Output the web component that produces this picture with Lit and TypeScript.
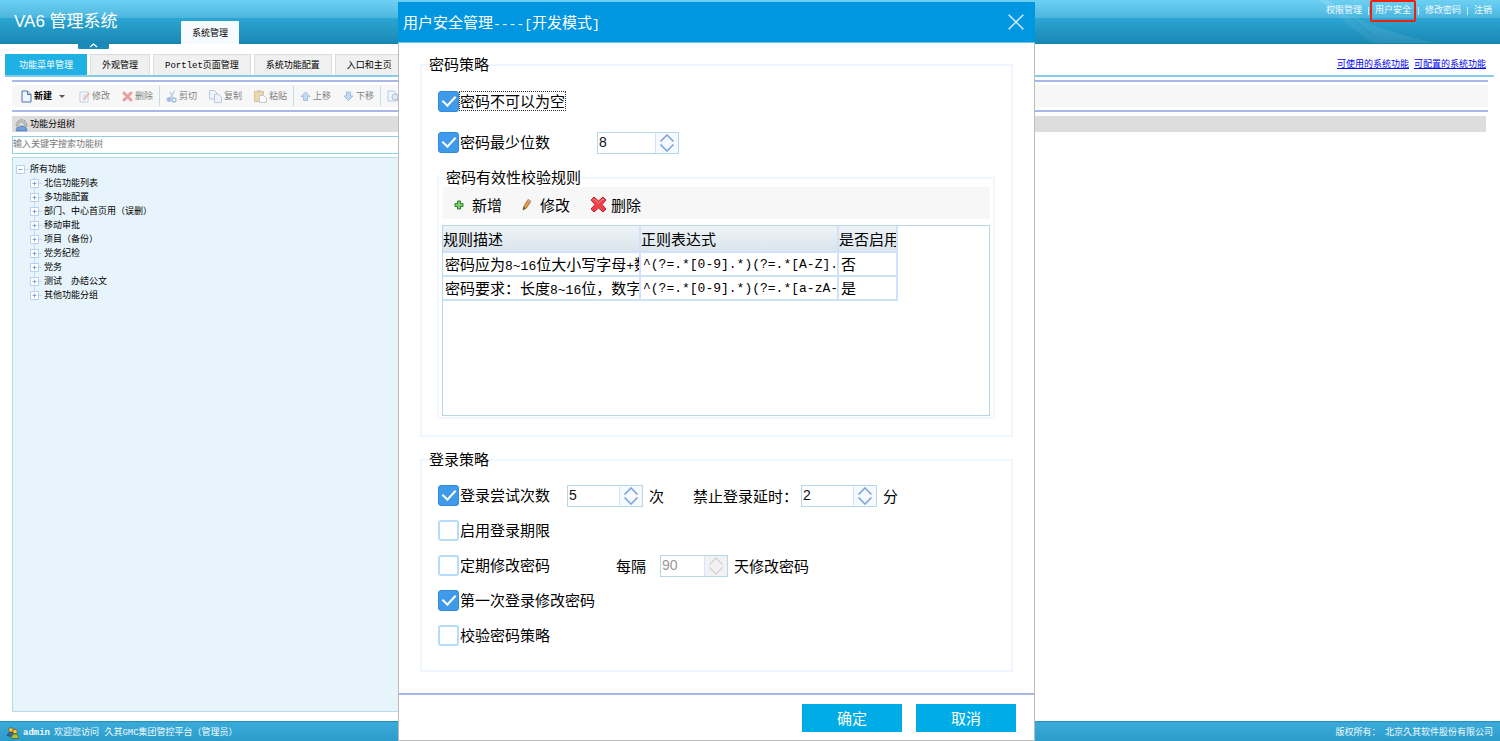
import { LitElement, html, svg, css } from "lit";
import { customElement, property } from "lit/decorators.js";

const icon = (w: number, h: number, body: unknown) =>
  html`<svg width=${w} height=${h} viewBox="0 0 ${w} ${h}" aria-hidden="true">${body}</svg>`;

const pageIcon = icon(11, 13, svg`
  <path d="M1 1h5.5L10 4.5V12H1z" fill="#eef5ff" stroke="#4a72ad"/>
  <path d="M6.5 1v3.5H10" fill="#b9d0f0" stroke="#4a72ad"/>`);
const editIcon = icon(11, 13, svg`
  <path d="M1 2h8v10H1z" fill="#fff" stroke="#7fa6d6"/>
  <path d="M3 5h4M3 7h3M3 9h4" stroke="#9dbce0"/>
  <path d="M4 9l5.5-7L11 3.5 6 10l-2 .5z" fill="#d98f7a"/>`);
const crossIcon = icon(11, 13, svg`
  <path d="M2 3l7 7M9 3l-7 7" stroke="#e04848" stroke-width="3" stroke-linecap="round"/>`);
const cutIcon = icon(11, 13, svg`
  <path d="M8.5 1L4.5 8M4 2l3 6" stroke="#7b9fd0" stroke-width="1.3" fill="none"/>
  <circle cx="3" cy="9.5" r="2" fill="#4f86cf" stroke="#4f86cf" stroke-width="1"/>
  <circle cx="8" cy="10" r="2" fill="none" stroke="#4f86cf" stroke-width="1.4"/>`);
const copyIcon = icon(13, 13, svg`
  <path d="M.5 .5h5L8 3v6H.5z" fill="#eaf2fd" stroke="#7a9fd6"/>
  <path d="M5.500 4.500h4l3 2.500v5.500h-7z" fill="#eaf2fd" stroke="#7a9fd6"/>`);
const pasteIcon = icon(13, 13, svg`
  <path d="M.5 1.500h9v10h-9z" fill="#e8b765" stroke="#c08c3c"/>
  <path d="M3 .3h4v2H3z" fill="#999"/>
  <path d="M5.500 5.500h4l3 2.500v4.500h-7z" fill="#fff" stroke="#8c9db5"/>`);
const upIcon = icon(11, 13, svg`
  <path d="M5.500 2L10 6.500H7.500V10.500h-4V6.500H1z" fill="#8fc0f0" stroke="#4f86d0"/>`);
const downIcon = icon(11, 13, svg`
  <path d="M5.500 10.500L10 6H7.500V2h-4v4H1z" fill="#8fc0f0" stroke="#4f86d0"/>`);
const findIcon = icon(13, 13, svg`
  <path d="M1 1h6l2 2v8H1z" fill="#eef5ff" stroke="#7a9fd6"/>
  <circle cx="8" cy="7" r="3" fill="#cfe6fb" stroke="#4f86d0"/>
  <path d="M10 9.500l2.500 3" stroke="#c08c3c" stroke-width="1.500"/>`);
const gearIcon = icon(13, 13, svg`
  <circle cx="6.500" cy="6" r="5.300" fill="#c4c4c4" stroke="#8c8c8c" stroke-dasharray="2 1"/>
  <circle cx="6.500" cy="6" r="3" fill="#ddd" stroke="#aaa"/>
  <path d="M1 12c0-3 2-3.500 3-3.500C5 6.500 8 6.500 9 8c2 0 3 1.500 3 4z" fill="#6f9fdc" stroke="#3f6cab" stroke-width=".6"/>`);
const usersIcon = icon(12, 12, svg`
  <circle cx="4" cy="3" r="2.300" fill="#f5c84c" stroke="#6b4c14" stroke-width=".7"/>
  <path d="M.5 9C.5 6 2 5.500 4 5.500S7 6 7 9z" fill="#3d6ca5" stroke="#1e3c60" stroke-width=".7"/>
  <circle cx="8" cy="4.500" r="2.300" fill="#f5c84c" stroke="#6b4c14" stroke-width=".7"/>
  <path d="M4.500 11.500c0-3.500 1.500-4.500 3.500-4.500s3.500 1 3.500 4.500z" fill="#a9c23a" stroke="#4e5c14" stroke-width=".7"/>`);
const plusIcon = icon(10, 10, svg`
  <path d="M3.500 1h3v2.500H9v3H6.500V9h-3V6.500H1v-3h2.500z" fill="#7ed065" stroke="#2b7d3a"/>`);
const pencilIcon = icon(10, 13, svg`
  <path d="M1 12l.8-3.500L6 1.500 9 3.200 4.500 10z" fill="#e39a45" stroke="#8a5a2a" stroke-width=".7"/>
  <path d="M1 12l.8-3L3.500 10z" fill="#444"/><path d="M6 1.500L9 3.200 8.300 4.300 5.300 2.600z" fill="#cfa9a0"/>`);
const bigCross = icon(17, 17, svg`
  <path d="M1 4l3-3 4.500 4L13 1l3 3-4 4.500 4 4.500-3 3-4.500-4L4 16l-3-3 4-4.500z" fill="#ec4248" stroke="#b3242c" stroke-linejoin="round"/>
  <path d="M3 4.200l1.200-1.200 4.300 4L13 3l1 1" fill="none" stroke="#f58a8c"/>`);

@customElement("spin-box")
export class SpinBox extends LitElement {
  @property() value = "";
  @property() label = "";
  @property({ type: Boolean }) disabled = false;

  static styles = css`
    :host { display: flex; height: 22px; width: 76px; box-sizing: border-box; border: 1px solid #b5d7ea; background: #fff; }
    input { flex: 1; min-width: 0; border: 0; padding: 0 1px 2px; margin: 0; outline: 0; background: none; color: #111; font: 14px "Liberation Sans", sans-serif; }
    input:disabled { color: #999; }
    .steps { width: 22px; display: flex; flex-direction: column; justify-content: center; gap: 2px; background: #f6faff; border-left: 1px solid #d3e6fb; }
    button { display: flex; justify-content: center; border: 0; padding: 0; background: none; }
    svg { stroke: #7ea4dc; fill: none; stroke-width: 1.600; }
    :host([disabled]) .steps { background: #f2f2f2; }
    :host([disabled]) svg { stroke: #d6d6d6; }
  `;

  render() {
    return html`
      <input type="text" inputmode="numeric" aria-label=${this.label} .value=${this.value} ?disabled=${this.disabled} />
      <div class="steps">
        <button type="button" aria-label="增加" ?disabled=${this.disabled}>${icon(16, 8, svg`<path d="M1.500 7.500L8 1l6.500 6.500"/>`)}</button>
        <button type="button" aria-label="减少" ?disabled=${this.disabled}>${icon(16, 8, svg`<path d="M1.500.5L8 7 14.500.5"/>`)}</button>
      </div>`;
  }
}

@customElement("app-root")
export class AppRoot extends LitElement {
  static styles = css`
    :host {
      display: flex; flex-direction: column; position: relative; min-height: 100vh; overflow: hidden;
      background: #fff; color: #000; font: 9px/14px "Liberation Mono", "Noto Sans CJK SC", monospace;
    }
    * { box-sizing: border-box; }
    svg { display: block; flex: none; }
    button, input { font: inherit; color: inherit; }
    button { border: 0; padding: 0; margin: 0; background: none; white-space: nowrap; }

    .top { position: relative; display: flex; align-items: flex-end; height: 44px; border-bottom: 1px solid #1583ad;
      background: linear-gradient(#6dd0f3 0, #4cb5de 18px, #2ca6d3 18px, #1a88b5 43px); }
    .swoosh { position: absolute; right: 0; top: 0; }
    .brand { width: 181px; padding-left: 14px; margin: 0; align-self: center; color: #fff; font: 17px/24px "Liberation Sans", "Noto Sans CJK SC", sans-serif; }
    .module { height: 23px; width: 58px; margin-bottom: -1px; padding-top: 3px; background: #f5fbfe; border-radius: 1px 1px 0 0; }
    .fold { position: absolute; left: 78px; top: 43px; width: 31px; height: 6px; display: flex; justify-content: center; background: #1c8ab8; border-radius: 0 0 1px 1px; }
    .account { position: relative; margin-left: auto; align-self: flex-start; display: flex; align-items: center; padding: 0 8px 0 0; height: 22px; color: #f2fbff; }
    .account a { color: inherit; text-decoration: none; padding: 0 6px; line-height: 18px; }
    .account a:last-child { padding-right: 0; }
    .account i { width: 1px; height: 8px; background: #cdecf8; }
    .account a.marked { border: 2px solid #f0200f; border-radius: 2px; height: 22px; padding: 0 3px; margin: 0 2px 0 1px; }

    .tabs { display: flex; align-items: flex-end; gap: 3px; margin: 11px 6px 0 5px; border-bottom: 2px solid #84cdea; height: 22px; }
    .tabs button { height: 21px; padding: 1px 11px 0; background: #f0f0f0; border: 1px solid #dcdcdc; border-bottom: 0; }
    .tabs button.on { padding: 1px 13px 0; background: #1fb0e4; border-color: #1fb0e4; color: #fff; }
    .links { margin-left: auto; display: flex; gap: 5px; padding-right: 8px; align-self: center; }
    .links a { color: #0000f0; }

    .bar { margin: 3px 12px 0; padding: 3px 0; border-top: 2px solid #a9b8e8; border-bottom: 2px solid #a9b8e8; height: 32px; }
    .tools { display: flex; align-items: center; height: 22px; padding-left: 3px; background: #f7f7f7; }
    .tools button { display: flex; align-items: center; gap: 2px; padding: 1px 6px 0; }
    .tools .off { opacity: .5; }
    .tools .first { padding-right: 8px; }
    .tools i { width: 1px; height: 20px; background: #c5dde4; }
    .caret { border: 3px solid transparent; border-top-color: #555; border-bottom: 0; margin-left: 5px; }

    .head { display: flex; align-items: center; gap: 2px; margin: 4px 14px 0 12px; padding: 2px 3px 0; height: 16px; background: #ddd; }
    .head h2 { margin: 0; font: inherit; }
    .side { flex: 1; display: flex; flex-direction: column; gap: 3px; width: 34%; margin: 4px 0 9px 12px; }
    .search { height: 18px; border: 1px solid #93cfe2; padding: 0; outline: 0; background: #fff; }
    .search::placeholder { color: #777; opacity: 1; }
    .tree { flex: 1; border: 1px solid #b9dcea; background: #e7f4fb; padding: 5px 3px; }
    .tree ul { list-style: none; margin: 0; padding: 0 0 0 14px; }
    .tree ul.root { padding: 0; }
    .row { display: flex; align-items: center; gap: 2px; height: 14px; white-space: pre; }

    .status { display: flex; align-items: center; gap: 4px; height: 20px; padding: 3px 7px 0; color: #f2fbff; background: linear-gradient(#1e8fbd 0, #3aabd9 2px, #2b9ccb 100%); }
    .status .owner { margin-left: auto; }

    .dialog { position: absolute; left: 398px; top: 2px; bottom: 0; width: 637px; display: flex; flex-direction: column;
      background: #fff; border: 1px solid #bcbcbc; border-top: 0; font: 15px/20px "Noto Sans CJK SC", sans-serif; }
    .code { font: 13px "Liberation Mono", monospace; }
    .title { display: flex; align-items: center; justify-content: space-between; height: 41px; margin: 0 -1px; padding: 0 11px 0 5px; background: #0096e0; border-bottom: 1px solid #6cc3ee; color: #fff; }
    .title h1 { margin: 0; font: inherit; }
    .content { flex: 1; display: flex; flex-direction: column; gap: 13px; padding: 12px 21px 21px; }
    fieldset { margin: 0; border: 2px solid #f0f6fe; min-width: 0; }
    legend { padding: 0; margin-left: -9px; height: 20px; line-height: 18px; }
    .policy { padding: 16px 16px 15px; height: 382px; }
    .stack { display: flex; flex-direction: column; gap: 20px; }
    .login { flex: 1; padding: 15px 16px; }
    .login .stack { gap: 14px; }
    .line { display: flex; align-items: center; gap: 6px; height: 21px; line-height: 18px; }
    .check { display: flex; align-items: center; gap: 1px; }
    .check span { margin-bottom: 1px; }
    .check input { appearance: none; display: flex; align-items: center; justify-content: center; width: 21px; height: 21px; margin: 0; border: 2px solid #b7dcfa; border-radius: 3px; background: #fff; }
    .check input:checked { background: #3f9bea; border: 1px solid #2f8ce0; }
    .check input:checked::after { content: ""; width: 6px; height: 11px; margin-top: -4px; border: solid #fff; border-width: 0 2px 2px 0; transform: rotate(43deg); }
    .focus { outline: 1px dotted #333; }
    .c1 { width: 123px; } .c2 { width: 153px; } .c3 { width: 172px; }
    .pair { margin-left: 23px; width: 102px; white-space: nowrap; }
    .each { width: 38px; }
    .w82 { width: 82px; } .w68 { width: 68px; }

    .rules { margin: 15px 0 0 -1px; padding: 0 3px 1px; height: 251px; }
    .rules legend { margin-left: 4px; }
    .inner { display: flex; flex-direction: column; gap: 6px; margin-top: -1px; }
    .ruletools { display: flex; align-items: center; gap: 20px; height: 32px; margin-left: 1px; padding: 3px 0 0 11px; background: #f7f7f7; }
    .ruletools button { display: flex; align-items: center; gap: 8px; }
    .ruletools button:last-child { gap: 4px; }
    .grid { height: 191px; border: 1px solid #b9d6e6; }
    table { border-collapse: separate; border-spacing: 0; table-layout: fixed; width: 455px; }
    th, td { height: 24px; padding: 0 0 0 2px; border-right: 2px solid #cfe2fb; border-bottom: 2px solid #cfe2fb; text-align: left; font-weight: 400; white-space: nowrap; overflow: hidden; line-height: 20px; }
    th { height: 27px; padding: 1px 0 0; background: linear-gradient(#eef3f7, #dbe5ec); }
    .wide { width: 198px; }

    .actions { display: flex; align-items: center; justify-content: flex-end; gap: 14px; height: 47px; padding-right: 18px; border-top: 2px solid #a6b7e6; }
    .actions button { width: 100px; height: 28px; background: #00ace6; color: #fff; }
  `;

  private tabs = ["功能菜单管理", "外观管理", "Portlet页面管理", "系统功能配置", "入口和主页"];
  private nodes = ["北信功能列表", "多功能配置", "部门、中心首页用（误删）", "移动审批", "项目（备份）", "党务纪检", "党务", "测试　办结公文", "其他功能分组"];

  private node(text: string, open: boolean, last = false) {
    return html`<div class="row">${icon(12, 14, svg`
      <path d=${open ? "M9 6.5h3" : last ? "M4.5 0v7M9 6.5h3" : "M4.5 0v14M9 6.5h3"} stroke="#c3daf5"/>
      <path d="M.5 2.5h8v8h-8z" fill="#fff" stroke="#b5d0f5"/>
      <path d=${open ? "M2.5 6.5h4" : "M2.5 6.5h4M4.5 4.500v4"} stroke="#7fa5dd"/>`)}<span>${text}</span></div>`;
  }

  private check(text: string, checked: boolean, cls = "", focus = false) {
    return html`<label class="check ${cls}"><input type="checkbox" .checked=${checked} /><span class=${focus ? "focus" : ""}>${text}</span></label>`;
  }

  private tool(glyph: unknown, text: string) {
    return html`<button type="button" class="off" aria-label=${text || "查找"}>${glyph}${text}</button>`;
  }

  render() {
    return html`
      <header class="top">
        <svg class="swoosh" width="220" height="43" viewBox="0 0 220 43" aria-hidden="true">
          <path d="M48 0Q75 22 102 43H92Q60 18 38 0z" fill="#fff" opacity=".06"/>
          <path d="M38 0Q90 28 154 43H102Q80 22 48 0z" fill="#fff" opacity=".08"/>
        </svg>
        <h1 class="brand">VA6 管理系统</h1>
        <button type="button" class="module">系统管理</button>
        <button type="button" class="fold" aria-label="收起">${icon(9, 5, svg`<path d="M1 4L4.500 1 8 4" fill="none" stroke="#fff" stroke-width="1.300"/>`)}</button>
        <nav class="account">
          <a href="#">权限管理</a><i></i><a href="#" class="marked">用户安全</a><i></i><a href="#">修改密码</a><i></i><a href="#">注销</a>
        </nav>
      </header>

      <nav class="tabs">
        ${this.tabs.map((t, i) => html`<button type="button" class=${i ? "" : "on"}>${t}</button>`)}
        <div class="links"><a href="#">可使用的系统功能</a><a href="#">可配置的系统功能</a></div>
      </nav>

      <div class="bar"><div class="tools">
        <button type="button" class="first">${pageIcon}<b>新建</b><span class="caret"></span></button>
        ${this.tool(editIcon, "修改")}${this.tool(crossIcon, "删除")}<i></i>
        ${this.tool(cutIcon, "剪切")}${this.tool(copyIcon, "复制")}${this.tool(pasteIcon, "粘贴")}<i></i>
        ${this.tool(upIcon, "上移")}${this.tool(downIcon, "下移")}<i></i>
        ${this.tool(findIcon, "")}
      </div></div>

      <div class="head">${gearIcon}<h2>功能分组树</h2></div>
      <main class="side">
        <input class="search" type="text" aria-label="搜索功能树" placeholder="输入关键字搜索功能树" />
        <div class="tree"><ul class="root"><li>
          ${this.node("所有功能", true)}
          <ul>${this.nodes.map((n, i) => html`<li>${this.node(n, false, i === this.nodes.length - 1)}</li>`)}</ul>
        </li></ul></div>
      </main>

      <footer class="status">
        ${usersIcon}<b>admin</b><span>欢迎您访问 久其GMC集团管控平台（管理员）</span>
        <span class="owner">版权所有：　北京久其软件股份有限公司</span>
      </footer>

      <section class="dialog" role="dialog" aria-labelledby="dialog-title">
        <div class="title">
          <h1 id="dialog-title">用户安全管理<span class="code">----[</span>开发模式<span class="code">]</span></h1>
          <button type="button" aria-label="关闭">${icon(16, 16, svg`<path d="M.7.7l14.600 14.600M15.300.7L.7 15.300" stroke="#d8effb" stroke-width="1.500"/>`)}</button>
        </div>
        <div class="content">
          <fieldset class="policy">
            <legend>密码策略</legend>
            <div class="stack">
              <div class="line">${this.check("密码不可以为空", true, "", true)}</div>
              <div class="line">${this.check("密码最少位数", true, "c2")}<spin-box class="w82" value="8" label="密码最少位数"></spin-box></div>
            </div>
            <fieldset class="rules">
              <legend>密码有效性校验规则</legend>
              <div class="inner">
                <div class="ruletools">
                  <button type="button">${plusIcon}新增</button>
                  <button type="button">${pencilIcon}修改</button>
                  <button type="button">${bigCross}删除</button>
                </div>
                <div class="grid">
                  <table>
                    <thead><tr><th class="wide">规则描述</th><th class="wide">正则表达式</th><th>是否启用</th></tr></thead>
                    <tbody>
                      <tr>
                        <td>密码应为<span class="code">8~16</span>位大小写字母<span class="code">+</span>数</td>
                        <td class="code">^(?=.*[0-9].*)(?=.*[A-Z].*</td><td>否</td>
                      </tr>
                      <tr>
                        <td>密码要求：长度<span class="code">8~16</span>位，数字</td>
                        <td class="code">^(?=.*[0-9].*)(?=.*[a-zA-Z</td><td>是</td>
                      </tr>
                    </tbody>
                  </table>
                </div>
              </div>
            </fieldset>
          </fieldset>
          <fieldset class="login">
            <legend>登录策略</legend>
            <div class="stack">
              <div class="line">
                ${this.check("登录尝试次数", true, "c1")}<spin-box value="5" label="登录尝试次数"></spin-box><span>次</span>
                <span class="pair">禁止登录延时：</span><spin-box value="2" label="禁止登录延时"></spin-box><span>分</span>
              </div>
              <div class="line">${this.check("启用登录期限", false)}</div>
              <div class="line">
                ${this.check("定期修改密码", false, "c3")}<span class="each">每隔</span><spin-box class="w68" value="90" label="每隔天数" disabled></spin-box><span>天修改密码</span>
              </div>
              <div class="line">${this.check("第一次登录修改密码", true)}</div>
              <div class="line">${this.check("校验密码策略", false)}</div>
            </div>
          </fieldset>
        </div>
        <div class="actions"><button type="button">确定</button><button type="button">取消</button></div>
      </section>
    `;
  }
}
